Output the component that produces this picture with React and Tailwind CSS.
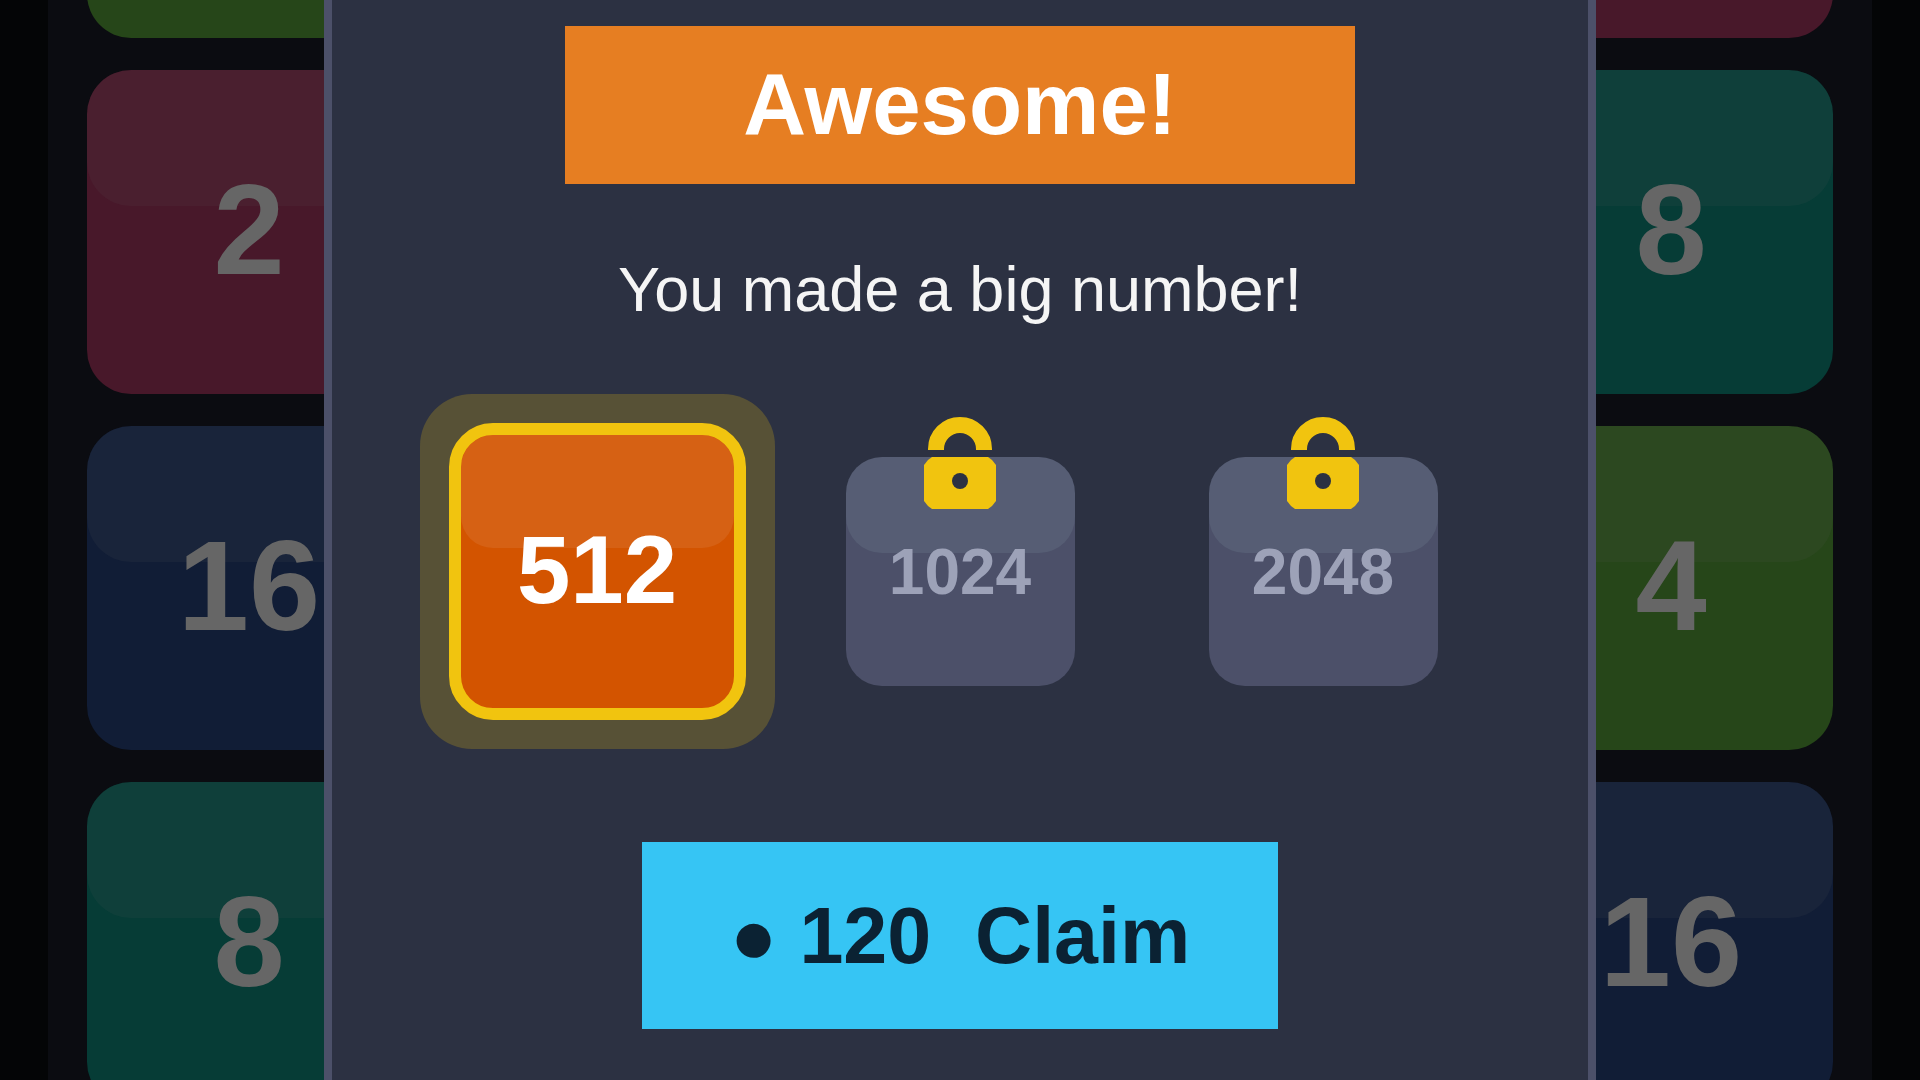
import clsx from 'clsx';

const TILE_COLORS = {
  2: 'bg-[#48182a]',
  4: 'bg-[#264619]',
  8: 'bg-[#063c36]',
  16: 'bg-[#111d36]',
};

// Outer columns of the board, the middle ones sit behind the dialog
const ROWS = [
  { id: 'r2', left: 2, right: 8 },
  { id: 'r3', left: 16, right: 4 },
  { id: 'r4', left: 8, right: 16 },
];

function BoardTile({ value }) {
  return (
    <div
      className={clsx(
        'relative flex size-[324px] items-center justify-center rounded-[44px] pb-1',
        TILE_COLORS[value]
      )}
    >
      <div className="absolute inset-x-0 top-0 h-[42%] rounded-[44px] bg-[#666666]/10" />
      <span className="relative text-[128px] leading-none font-bold text-[#666666]">{value}</span>
    </div>
  );
}

// Bottom edge of a tile that is scrolled past the top of the board
function TileEdge({ value }) {
  return (
    <div className="flex h-[38px] w-[324px] items-end overflow-hidden">
      <div className={clsx('h-24 w-full shrink-0 rounded-b-[44px]', TILE_COLORS[value])} />
    </div>
  );
}

function LockIcon() {
  return (
    <svg
      className="absolute -top-10 left-1/2 h-[92px] w-[72px] -translate-x-1/2"
      viewBox="0 0 72 92"
      aria-hidden="true"
    >
      <path d="M12 33V32a24 24 0 0 1 48 0v1" fill="none" stroke="#f1c40f" strokeWidth="16" />
      <path
        d="M8 40h56l4 3 4 5v36l-4 5-4 3H8l-4-3-4-5V48l4-5z"
        fill="#f1c40f"
      />
      <circle cx="36" cy="64" r="8" fill="#2c3142" />
    </svg>
  );
}

function CurrentTile({ value }) {
  return (
    <div className="rounded-[52px] bg-[#f1c40f]/22 p-[29px]">
      <div className="relative flex size-[297px] items-center justify-center overflow-hidden rounded-[44px] border-[12px] border-[#f1c40f] bg-[#d35400] pb-1">
        <div className="absolute inset-x-0 top-0 h-[113px] rounded-b-[32px] bg-white/8" />
        <span className="relative text-8xl leading-none font-bold text-white">{value}</span>
      </div>
    </div>
  );
}

function LockedTile({ value }) {
  return (
    <div className="relative flex size-[229px] items-center justify-center rounded-[36px] bg-[#4c5069]">
      <div className="absolute inset-x-0 top-0 h-[42%] rounded-[36px] bg-[#b4dcdc]/10" />
      <span className="relative text-[64px] leading-none font-bold text-[#9da2b8]">{value}</span>
      <LockIcon />
    </div>
  );
}

function App() {
  return (
    <div className="relative h-screen overflow-hidden bg-[#040506] font-['Liberation_Sans',Arial,sans-serif]">
      {/* Board */}
      <main className="mx-12 flex h-full flex-col gap-8 overflow-hidden bg-[#0b0c11] px-[39px]">
        <div className="flex justify-between">
          <TileEdge value={4} />
          <TileEdge value={2} />
        </div>
        {ROWS.map((row) => (
          <div key={row.id} className="flex justify-between">
            <BoardTile value={row.left} />
            <BoardTile value={row.right} />
          </div>
        ))}
      </main>

      {/* Reward dialog */}
      <div className="absolute inset-0 flex justify-center">
        <section
          role="dialog"
          aria-labelledby="reward-title"
          className="flex w-full max-w-[1272px] flex-col items-center border-x-8 border-[#4c5069] bg-[#2c3142] pt-[26px]"
        >
          <h1
            id="reward-title"
            className="flex h-[158px] w-full max-w-[790px] items-center justify-center bg-[#e67e22] pb-1 text-[87px] leading-none font-bold text-white"
          >
            Awesome!
          </h1>
          <p className="mt-[73px] text-[63px] leading-[64px] text-[#f5f5f5]">
            You made a big number!
          </p>

          <div className="mt-[73px] grid w-full max-w-[1089px] grid-cols-3 place-items-center">
            <CurrentTile value={512} />
            <LockedTile value={1024} />
            <LockedTile value={2048} />
          </div>

          <button
            type="button"
            className="mt-[93px] h-[187px] w-full max-w-[636px] bg-[#36c5f4] text-[79px] leading-none font-bold whitespace-pre text-[#0b2233]"
          >
            {'● 120  Claim'}
          </button>
        </section>
      </div>
    </div>
  );
}

export default App;
